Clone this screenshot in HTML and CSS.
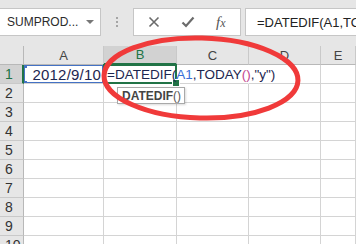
FILE: index.html
```html
<!DOCTYPE html>
<html>
<head>
  <title>DATEDIF</title>
  <meta name="viewport" content="width=device-width, initial-scale=1">
  <link rel="stylesheet" href="styles.css">
</head>
<body>
  <div class="sheet">
    <div class="toolbar">
      <div class="namebox">
        <span class="name">SUMPROD...</span>
        <span class="caret"></span>
      </div>
      <div class="grip"><i></i><i></i><i></i></div>
      <div class="btns">
        <svg width="12" height="12" viewBox="0 0 12 12"><path d="M1.5 1.5 L10.5 10.5 M10.5 1.5 L1.5 10.5" stroke="#6b6b6b" stroke-width="1.6" fill="none"/></svg>
        <svg width="14" height="12" viewBox="0 0 14 12"><path d="M1.5 6.5 L5 10 L12.5 1.5" stroke="#6b6b6b" stroke-width="2.2" fill="none"/></svg>
        <span class="fx">f<small>x</small></span>
      </div>
      <div class="fbar">=DATEDIF(A1,TODAY(),"y")</div>
    </div>

    <div class="grid">
      <div class="hd corner"></div>
      <div class="hd">A</div>
      <div class="hd sel">B</div>
      <div class="hd">C</div>
      <div class="hd">D</div>
      <div class="hd">E</div>

      <div class="rh sel">1</div>
      <div class="c ref"><span class="val">2012/9/10</span></div>
      <div class="c active"><span class="formula">=DATEDIF(<span class="r1">A1</span>,TODAY<span class="p">()</span>,"y")</span></div>
      <div class="c open"></div>
      <div class="c"></div>
      <div class="c"></div>

      <div class="rh">2</div><div class="c"></div><div class="c"></div><div class="c"></div><div class="c"></div><div class="c"></div>
      <div class="rh">3</div><div class="c"></div><div class="c"></div><div class="c"></div><div class="c"></div><div class="c"></div>
      <div class="rh">4</div><div class="c"></div><div class="c"></div><div class="c"></div><div class="c"></div><div class="c"></div>
      <div class="rh">5</div><div class="c"></div><div class="c"></div><div class="c"></div><div class="c"></div><div class="c"></div>
      <div class="rh">6</div><div class="c"></div><div class="c"></div><div class="c"></div><div class="c"></div><div class="c"></div>
      <div class="rh">7</div><div class="c"></div><div class="c"></div><div class="c"></div><div class="c"></div><div class="c"></div>
      <div class="rh">8</div><div class="c"></div><div class="c"></div><div class="c"></div><div class="c"></div><div class="c"></div>
      <div class="rh">9</div><div class="c"></div><div class="c"></div><div class="c"></div><div class="c"></div><div class="c"></div>
      <div class="rh">10</div><div class="c"></div><div class="c"></div><div class="c"></div><div class="c"></div><div class="c"></div>
    </div>

    <div class="tip"><b>DATEDIF</b>()</div>

    <svg class="mark" width="356" height="244" viewBox="0 0 356 244">
      <ellipse cx="201" cy="78" rx="97" ry="40" transform="rotate(1.5 201 78)" fill="none" stroke="#f03a3a" stroke-width="5"/>
    </svg>
  </div>
</body>
</html>
```

FILE: styles.css
```css
* {padding: 0; margin: 0; box-sizing: border-box;}
html, body {width: 356px; height: 244px; overflow: hidden; background: #fff;}
body {font-family: "Liberation Sans", Arial, sans-serif;}

.sheet {position: relative; width: 356px; height: 244px; overflow: hidden;}

/* formula bar */
.toolbar {height: 46px; display: flex; padding: 8px 0 10px 0; background: #e6e6e6;}

.namebox {width: 101px; display: flex; align-items: center; justify-content: space-between; padding: 0 6px 0 7px; background: #fff; border: 1px solid #c6c6c6; border-left: none;}
.name {font-size: 12px; color: #2b2b2b;}
.caret {width: 0; height: 0; border-left: 4px solid transparent; border-right: 4px solid transparent; border-top: 4px solid #777;}

.grip {width: 32px; display: flex; flex-direction: column; align-items: center; justify-content: center; gap: 2px;}
.grip i {display: block; width: 2px; height: 2px; background: #a5a5a5;}

.btns {width: 108px; display: flex; align-items: center; justify-content: space-around; padding: 0 4px; background: #fff; border: 1px solid #c6c6c6;}
.fx {font-family: "Liberation Serif", serif; font-style: italic; font-size: 15px; color: #555;}
.fx small {font-size: 12px;}

.fbar {flex: 1; margin-left: 4px; padding-left: 11px; display: flex; align-items: center; white-space: nowrap; overflow: hidden; font-size: 13px; color: #222; background: #fff; border: 1px solid #c6c6c6; border-right: none;}

/* grid */
.grid {display: grid; grid-template-columns: 24px 80px 73px 72px 72px 1fr; grid-auto-rows: 19px;}

.hd {background: #e6e6e6; border-right: 1px solid #c9c9c9; border-bottom: 1px solid #b8b8b8; font-size: 13px; color: #444; display: flex; align-items: center; justify-content: center;}
.hd.corner {border-right-color: #b8b8b8;}
.hd.sel {background: #d2d2d2; color: #217346; border-bottom: 2px solid #217346;}

.rh {background: #e6e6e6; border-right: 1px solid #b8b8b8; border-bottom: 1px solid #c9c9c9; font-size: 14px; color: #333; display: flex; align-items: center; padding-left: 5px;}
.rh.sel {background: #d2d2d2; color: #217346; border-right: 2px solid #217346;}

.c {position: relative; border-right: 1px solid #d4d4d4; border-bottom: 1px solid #d4d4d4; font-size: 14px; color: #1d2650; white-space: nowrap;}
.c.open {border-right-color: transparent;}

.ref {box-shadow: inset 0 0 0 1px #4472c4; display: flex; align-items: center; justify-content: flex-end; padding-right: 2px; overflow: hidden;}
.ref .val {font-size: 15px; letter-spacing: 0.2px;}
.ref::before, .ref::after {content: ""; position: absolute; left: -1px; width: 4px; height: 4px; background: #4472c4;}
.ref::before {top: -1px;}
.ref::after {bottom: -2px;}

.active::before {content: ""; position: absolute; left: -1px; top: -1px; right: -1px; bottom: -1px; border: 2px solid #217346; z-index: 1;}
.active::after {content: ""; position: absolute; right: -4px; bottom: -4px; width: 6px; height: 6px; background: #217346; border: 1px solid #fff; z-index: 1;}
.formula {position: absolute; left: 3px; top: 1px; line-height: 17px; font-size: 13.5px; z-index: 2;}
.formula .r1 {color: #3a6fd8;}
.formula .p {color: #c2468f;}

/* function hint */
.tip {position: absolute; left: 117px; top: 87px; height: 17px; padding: 0 3px 0 4px; display: flex; align-items: center; font-size: 12px; color: #555; background: #fff; border: 1px solid #a9a9a9; box-shadow: 1px 1px 2px rgba(0,0,0,0.15); z-index: 3;}
.tip b {color: #444;}

.mark {position: absolute; left: 0; top: 0; z-index: 4; pointer-events: none;}
```
